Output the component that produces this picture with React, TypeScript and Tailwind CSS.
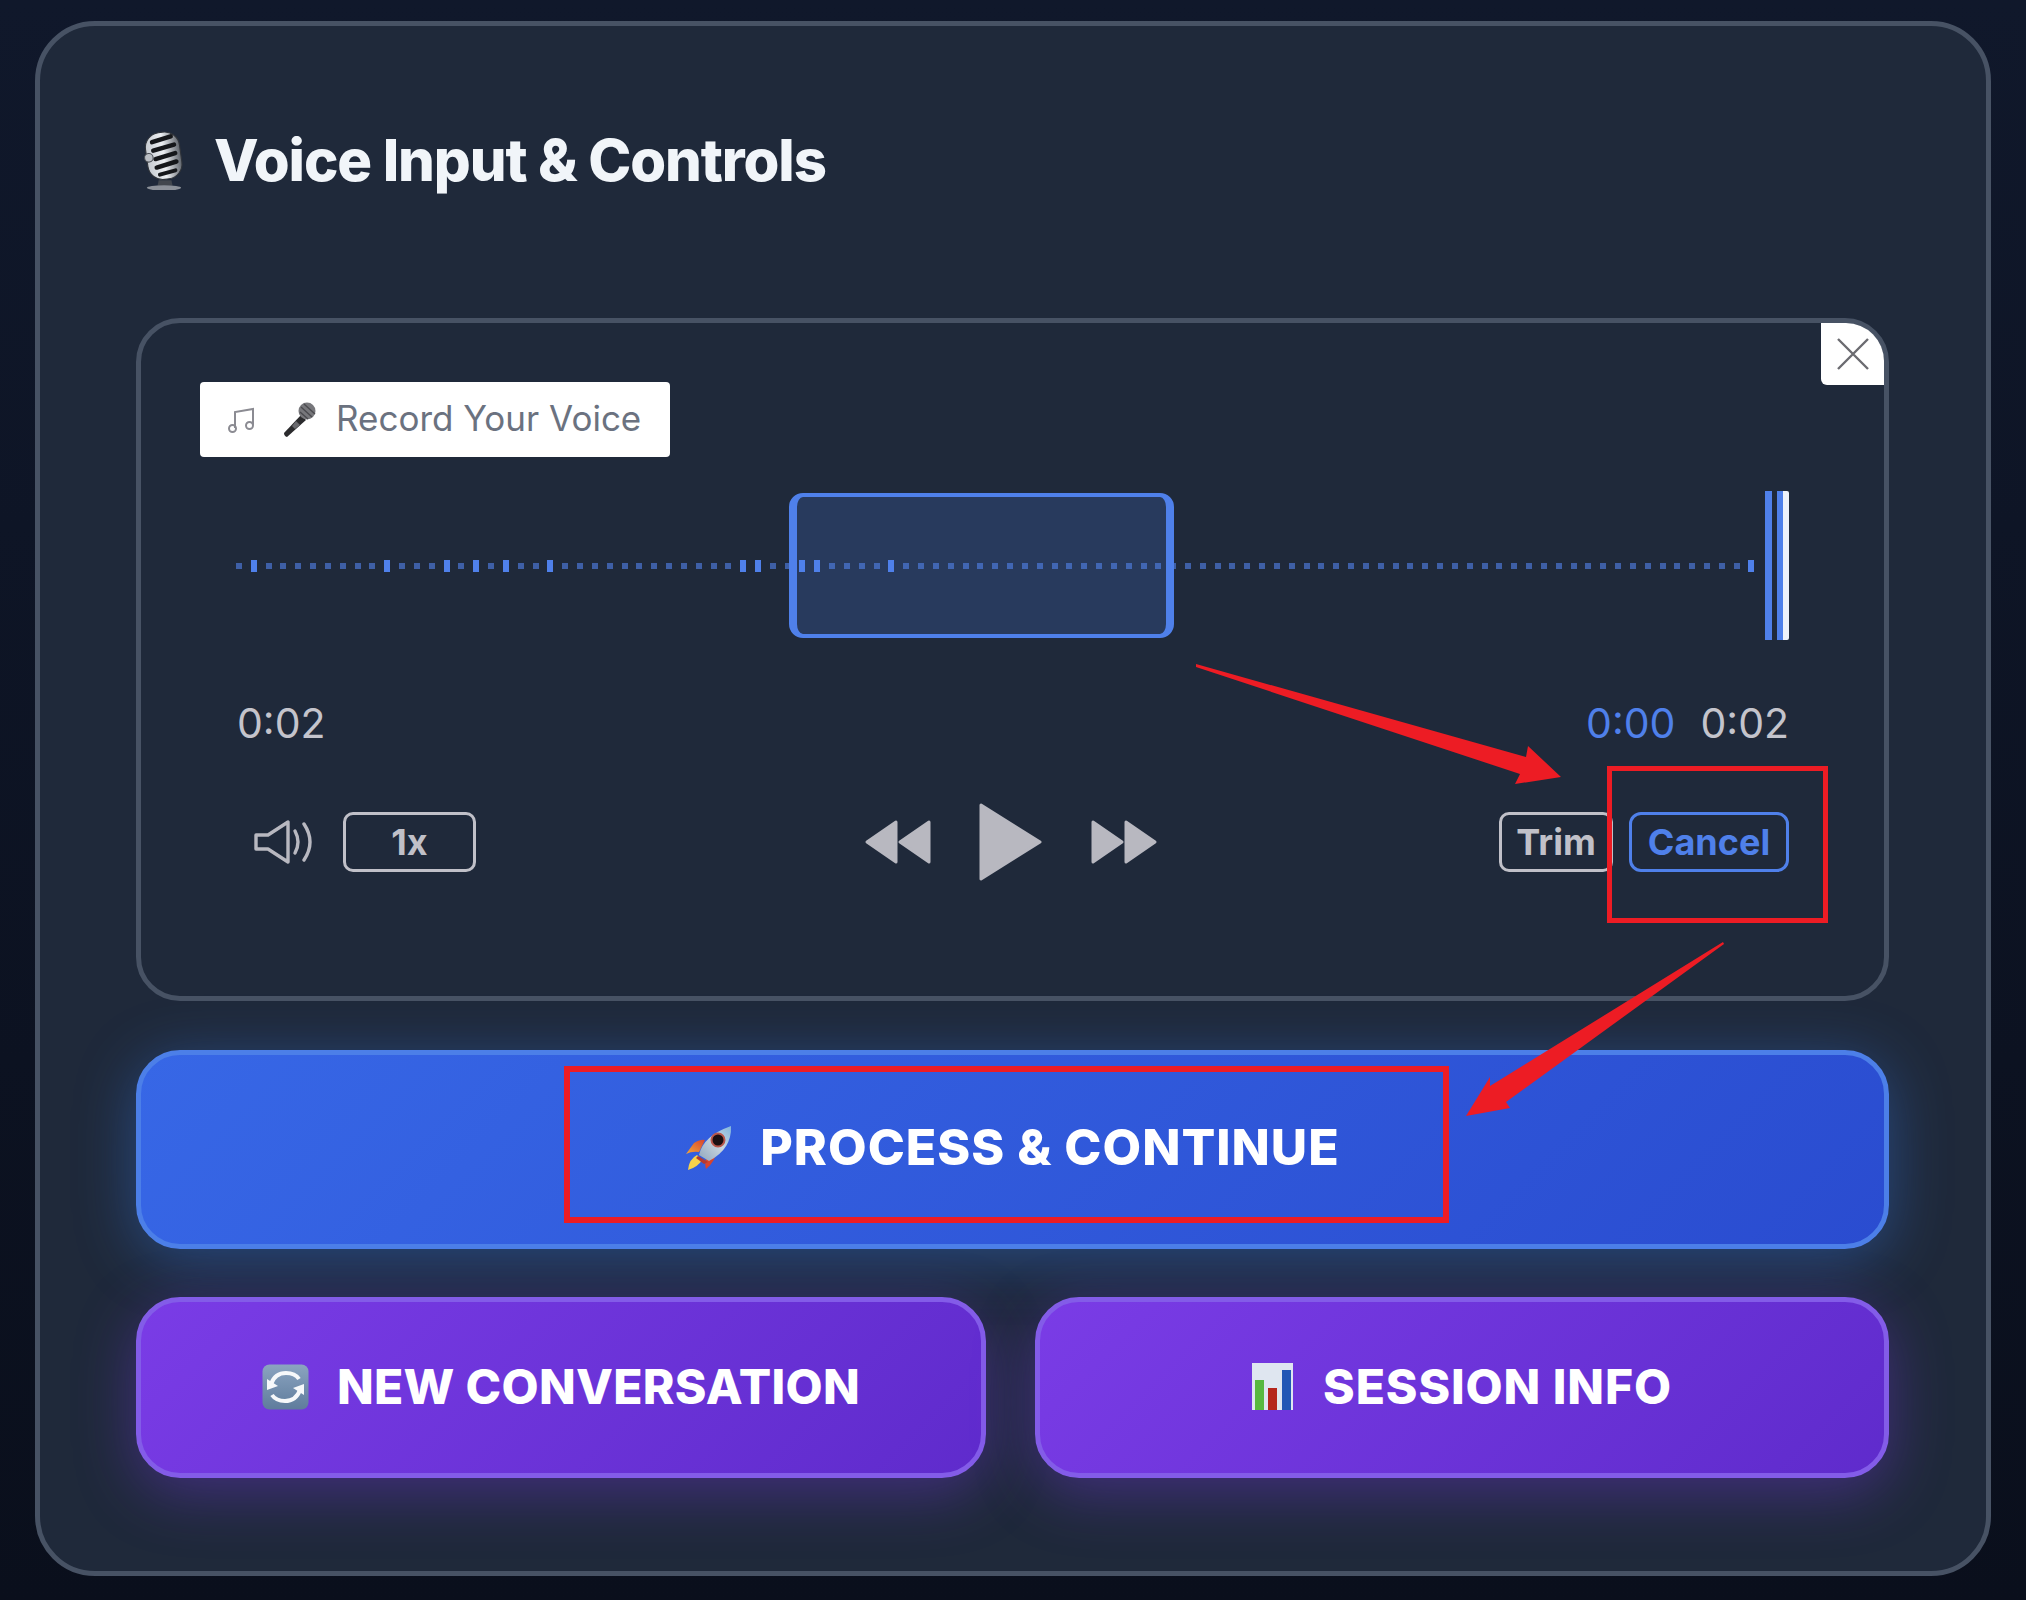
const tallDots = [1, 10, 14, 16, 18, 21, 34, 35, 38, 39, 44, 102]

function StudioMic() {
  return (
    <svg viewBox="4 0 34 56" className="h-[60px] w-[42px] shrink-0" aria-hidden="true">
      <defs>
        <linearGradient id="micBody" x1="0" y1="0" x2="1" y2="0">
          <stop offset="0" stopColor="#c4c9cf" />
          <stop offset="0.5" stopColor="#eceff2" />
          <stop offset="1" stopColor="#5f646b" />
        </linearGradient>
      </defs>
      <g transform="rotate(-8 21 26)">
        <rect x="5" y="2" width="32" height="44" rx="14" fill="url(#micBody)" stroke="#30343a" strokeWidth="1" />
        <path d="M12 10 L30 7" stroke="#15171a" strokeWidth="4.2" strokeLinecap="round" />
        <path d="M12 18 L32 15" stroke="#15171a" strokeWidth="4.2" strokeLinecap="round" />
        <path d="M13 26 L32 23" stroke="#15171a" strokeWidth="4.2" strokeLinecap="round" />
        <path d="M13 34 L32 31" stroke="#15171a" strokeWidth="4.2" strokeLinecap="round" />
        <path d="M15 41 L30 39" stroke="#15171a" strokeWidth="3.6" strokeLinecap="round" />
        <circle cx="7" cy="24" r="4" fill="#b9bdc3" stroke="#4a4e54" strokeWidth="1" />
      </g>
      <path d="M16 47 L28 47 L29 52 L15 52 Z" fill="#42474e" />
      <ellipse cx="21" cy="54" rx="16" ry="2.5" fill="#8b9098" />
    </svg>
  )
}

function HandMic() {
  return (
    <svg viewBox="0 0 36 36" className="h-[36px] w-[36px] shrink-0" aria-hidden="true">
      <path d="M20 13 L3 31 Q3 34 6 35 L25 18 Z" fill="#2b2b2d" />
      <path d="M15 19 L19 23 L14 27 L11 24 Z" fill="#6a6a6e" />
      <circle cx="26" cy="9" r="8.5" fill="#77777b" />
      <path d="M20 5 L31 15 M23 2 L34 12 M19 10 L27 17" stroke="#4a4a4e" strokeWidth="1.4" />
    </svg>
  )
}

function Rocket() {
  return (
    <svg viewBox="0 0 48 46" className="h-[46px] w-[48px] shrink-0" aria-hidden="true">
      <defs>
        <linearGradient id="rocketBody" x1="0" y1="1" x2="1" y2="0">
          <stop offset="0" stopColor="#8fa6bd" />
          <stop offset="0.55" stopColor="#c9d6e0" />
          <stop offset="1" stopColor="#7fb6de" />
        </linearGradient>
        <linearGradient id="rocketFin" x1="0" y1="1" x2="1" y2="0">
          <stop offset="0" stopColor="#f2a93a" />
          <stop offset="1" stopColor="#d8432e" />
        </linearGradient>
      </defs>
      <path d="M1 29 L9 18 Q16 14 20 15 L14 27 Q7 26 1 29 Z" fill="url(#rocketFin)" />
      <path d="M21 44 Q19 39 22 30 L32 24 Q31 36 21 44 Z" fill="#d8432e" />
      <path d="M3 45 Q4 34 12 30 L17 35 Q13 42 3 45 Z" fill="#f7d24a" />
      <path d="M14 30 Q18 11 46 1 Q47 24 24 36 Z" fill="url(#rocketBody)" />
      <circle cx="33" cy="15" r="6.5" fill="#1b1012" stroke="#b8574c" strokeWidth="2" />
      <path d="M13 31 L23 37 L19 39 L11 33 Z" fill="#b53a30" />
    </svg>
  )
}

function RefreshEmoji() {
  return (
    <svg viewBox="0 0 47 46" className="h-[46px] w-[47px] shrink-0" aria-hidden="true">
      <defs>
        <linearGradient id="refreshBg" x1="0" y1="0" x2="0" y2="1">
          <stop offset="0" stopColor="#8ba4c0" />
          <stop offset="1" stopColor="#5f7c9c" />
        </linearGradient>
      </defs>
      <rect x="0.5" y="0.5" width="46" height="45" rx="7" fill="url(#refreshBg)" />
      <path d="M9 20 Q13 9 24 9 Q33 9 37 15" fill="none" stroke="#f6f8fa" strokeWidth="4" />
      <path d="M5 15 L16 22 L5 26 Z" fill="#f6f8fa" />
      <path d="M38 26 Q34 37 23 37 Q14 37 10 31" fill="none" stroke="#f6f8fa" strokeWidth="4" />
      <path d="M42 31 L31 24 L42 20 Z" fill="#f6f8fa" />
    </svg>
  )
}

function ChartEmoji() {
  return (
    <svg viewBox="0 0 41 47" className="h-[47px] w-[41px] shrink-0" aria-hidden="true">
      <rect width="41" height="47" fill="#dfe6f0" />
      <rect x="3" y="17" width="9" height="30" fill="#58b83f" />
      <rect x="16" y="25" width="9" height="22" fill="#b5261c" />
      <rect x="30" y="7" width="9" height="40" fill="#2257b5" />
    </svg>
  )
}

function Speaker() {
  return (
    <svg viewBox="0 0 61 44" className="h-[44px] w-[61px] shrink-0" fill="none" stroke="#b8b8c0" strokeWidth="3.4" strokeLinejoin="round" strokeLinecap="round" aria-hidden="true">
      <path d="M2 15 H14 L34 2 V42 L14 29 H2 Z" />
      <path d="M41 11 Q47 22 41 33" />
      <path d="M50 4 Q62 22 50 40" />
    </svg>
  )
}

function Rewind({ flip }: { flip?: boolean }) {
  return (
    <svg viewBox="0 0 66 44" className={flip ? 'h-[44px] w-[66px] shrink-0 -scale-x-100' : 'h-[44px] w-[66px] shrink-0'} fill="#b8b8c0" stroke="#b8b8c0" strokeWidth="3" strokeLinejoin="round" aria-hidden="true">
      <path d="M2 22 L31 2 V42 Z" />
      <path d="M35 22 L64 2 V42 Z" />
    </svg>
  )
}

function PillButton({ children, blue, wide }: { children: React.ReactNode; blue?: boolean; wide?: boolean }) {
  return (
    <button
      className={
        blue
          ? 'h-[60px] w-[160px] rounded-[12px] border-[3px] border-[#4f80ea] pb-[4px] text-[36px] font-bold text-[#4f80ea]'
          : wide
            ? 'h-[60px] w-[133px] rounded-[10px] border-[3px] border-[#c0c0c8] pb-[4px] text-[36px] font-bold text-[#c0c0c8]'
            : 'h-[60px] w-[114px] rounded-[10px] border-[3px] border-[#c0c0c8] pb-[4px] text-[36px] font-bold text-[#c0c0c8]'
      }
    >
      {children}
    </button>
  )
}

export default function App() {
  return (
    <div className="relative h-[1600px] w-[2026px] overflow-hidden bg-gradient-to-b from-[#10182b] to-[#0a0f1c] pl-[35px] pt-[21px] [font-family:Inter,sans-serif]">
      <div className="h-[1555px] w-[1956px] rounded-[60px] border-[5px] border-[#475264] bg-[#1f293a] px-[96px]">
        <div className="flex h-[292px] items-start pt-[104px]">
          <span className="ml-[7px]"><StudioMic /></span>
          <h2 className="ml-[29px] -mt-[4px] text-[58px] leading-[68px] font-extrabold tracking-[-1.1px] text-[#f1f5f9]">Voice Input &amp; Controls</h2>
        </div>

        <section className="relative h-[683px] w-[1753px] rounded-[44px] border-[5px] border-[#475264] pl-[59px] pr-[95px] pt-[59px]">
          <button className="absolute right-0 top-0 flex h-[62px] w-[63px] items-center justify-center rounded-tr-[38px] rounded-bl-[6px] bg-white text-[#6b7280]">
            <svg viewBox="0 0 32 32" className="h-[32px] w-[32px]" fill="none" stroke="#6b6b70" strokeWidth="2.4" aria-hidden="true">
              <path d="M1 1 L31 31 M31 1 L1 31" />
            </svg>
          </button>

          <div className="flex h-[75px] w-[470px] items-center rounded-[4px] bg-white pl-[28px]">
            <svg viewBox="0 0 26 26" className="h-[26px] w-[26px] shrink-0" fill="none" stroke="#8b8b92" strokeWidth="2" aria-hidden="true">
              <path d="M7 21 V5 L25 2 V18" />
              <circle cx="4.5" cy="21.5" r="3.5" />
              <circle cx="21.5" cy="18.5" r="3.5" />
            </svg>
            <span className="ml-[27px]"><HandMic /></span>
            <span className="ml-[19px] pb-[3px] text-[35px] leading-none text-[#6b7280]">Record Your Voice</span>
          </div>

          <div className="mt-[36px] flex h-[145px] items-center pl-[36px]">
            <div className="relative flex h-[145px] w-[1519px] items-center gap-[8.84px]">
              {Array.from({ length: 103 }, (_, i) => (
                <span
                  key={i}
                  className={tallDots.includes(i) ? 'h-[12px] w-[6px] shrink-0 bg-[#4f80ea]' : 'h-[6px] w-[6px] shrink-0 bg-[#3e5fa6]'}
                />
              ))}
              <div className="absolute left-[553px] top-0 h-[145px] w-[385px] rounded-[14px] border-x-[8px] border-y-[4px] border-[#4f80ea] bg-[#4f80ea]/20" />
            </div>
            <span className="ml-[10px] h-[149px] w-[7px] bg-[#4f80ea]" />
            <span className="ml-[5px] h-[149px] w-[6px] bg-[#4f80ea]" />
            <span className="h-[149px] w-[6px] rounded-r-[2px] bg-[#eef2fb]" />
          </div>

          <div className="mt-[60px] flex h-[50px] items-center pl-[37px] text-[41px] leading-none font-normal text-[#c4c4cc]">
            <span>0:02</span>
            <span className="ml-auto text-[#4f80ea]">0:00</span>
            <span className="ml-[25px]">0:02</span>
          </div>

          <div className="mt-[55px] flex h-[78px] items-center pl-[54px]">
            <Speaker />
            <span className="ml-[28px]"><PillButton wide>1x</PillButton></span>
            <span className="ml-[389px]"><Rewind /></span>
            <svg viewBox="0 0 63 78" className="ml-[48px] h-[78px] w-[63px] shrink-0" fill="#b8b8c0" stroke="#b8b8c0" strokeWidth="3" strokeLinejoin="round" aria-hidden="true">
              <path d="M2 2 L61 39 L2 76 Z" />
            </svg>
            <span className="ml-[49px]"><Rewind flip /></span>
            <div className="ml-auto flex gap-[16px]">
              <PillButton>Trim</PillButton>
              <PillButton blue>Cancel</PillButton>
            </div>
          </div>
        </section>

        <button className="mt-[49px] flex h-[199px] w-[1753px] items-center justify-center gap-[27px] rounded-[44px] border-[5px] border-[#4c7fe8] bg-[linear-gradient(135deg,#3767e6,#2a4cd0)] pb-[4px] text-[50px] font-extrabold tracking-[1px] text-white shadow-[0_10px_60px_rgba(59,130,246,0.38)]">
          <Rocket />
          PROCESS &amp; CONTINUE
        </button>

        <div className="mt-[48px] grid grid-cols-[850px_854px] gap-[49px]">
          <button className="flex h-[181px] items-center justify-center gap-[28px] rounded-[44px] border-[5px] border-[#835ce8] bg-[linear-gradient(135deg,#7a3ce6,#5f2bcc)] pb-[2px] text-[48px] font-extrabold tracking-[0.3px] text-white shadow-[0_15px_60px_rgba(124,58,237,0.38)]">
            <RefreshEmoji />
            NEW CONVERSATION
          </button>
          <button className="flex h-[181px] items-center justify-center gap-[30px] rounded-[44px] border-[5px] border-[#835ce8] bg-[linear-gradient(135deg,#7a3ce6,#5f2bcc)] pb-[2px] text-[48px] font-extrabold tracking-[0.9px] text-white shadow-[0_15px_60px_rgba(124,58,237,0.38)]">
            <ChartEmoji />
            SESSION INFO
          </button>
        </div>
      </div>

      {/* review annotations drawn on top of the screenshot */}
      <div className="absolute left-[1607px] top-[766px] h-[157px] w-[221px] border-[5px] border-[#ed1c24]" />
      <div className="absolute left-[564px] top-[1066px] h-[157px] w-[885px] border-[6px] border-[#ed1c24]" />
      <svg viewBox="0 0 2026 1600" className="pointer-events-none absolute left-0 top-0 h-[1600px] w-[2026px]" fill="#ed1c24" aria-hidden="true">
        <polygon points="1196,664 1526,757 1528,746 1561,777 1515,784 1520,774 1196,667" />
        <polygon points="1723,942 1490,1086 1490,1077 1466,1116 1510,1108 1506,1102 1724,944" />
      </svg>
    </div>
  )
}
